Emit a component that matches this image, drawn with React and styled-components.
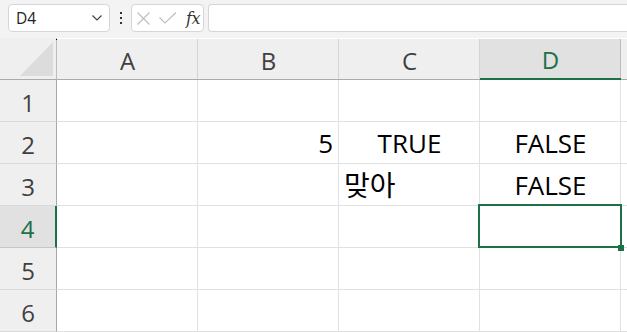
import React from "react";
import styled, { createGlobalStyle, css } from "styled-components";

const Global = createGlobalStyle`
  html, body { margin: 0; padding: 0; background: #f3f3f3; overflow: hidden; }
  body { font-family: "Open Sans", "Noto Sans", sans-serif; }
`;

const GREEN = "#1e7145";

const Page = styled.div`
  width: 627px;
  height: 332px;
  overflow: hidden;
  background: #f3f3f3;
  display: flex;
  flex-direction: column;
`;

const Toolbar = styled.div`
  height: 38px;
  flex: none;
  display: flex;
  align-items: flex-start;
  padding: 4px 0 0 8px;
  box-sizing: border-box;
`;

const Box = styled.div`
  height: 28px;
  box-sizing: border-box;
  background: #fff;
  border: 1px solid #d6d6d6;
  border-radius: 4px;
  display: flex;
  align-items: center;
`;

const NameBox = styled(Box)`
  width: 102px;
  padding: 0 6px 0 7px;
  justify-content: space-between;
  font-size: 15.5px;
  color: #222;
  font-family: "Open Sans", sans-serif;
`;

const Dots = styled.div`
  width: 21px;
  height: 28px;
  display: flex;
  flex-direction: column;
  align-items: center;
  justify-content: center;
  gap: 3px;
  span { width: 2px; height: 2px; background: #333; display: block; }
`;

const FxBox = styled(Box)`
  width: 73px;
  padding: 0 3px 0 5px;
  justify-content: space-between;
`;

const Fx = styled.span`
  font-family: "DejaVu Serif", "Liberation Serif", serif;
  font-style: italic;
  font-size: 16px;
  color: #333;
  letter-spacing: -0.5px;
`;

const Formula = styled(Box)`
  flex: 1;
  margin-left: 4px;
  border-top-right-radius: 0;
  border-bottom-right-radius: 0;
  border-right: none;
`;

const Sheet = styled.div`
  flex: 1;
  display: grid;
  grid-template-columns: 57px 141px 141px 141px 141px 1fr;
  grid-template-rows: 42px repeat(6, 42px);
  background: #fff;
`;

const Corner = styled.div`
  background: #efefef;
  border-right: 1px solid #bcbcbc;
  border-bottom: 1px solid #ababab;
  position: relative;
  &::after {
    content: "";
    position: absolute;
    right: 3px;
    bottom: 3px;
    width: 0;
    height: 0;
    border-style: solid;
    border-width: 0 0 34px 33px;
    border-color: transparent transparent #dcdcdc transparent;
  }
  &::before {
    content: "";
    position: absolute;
    right: -1px;
    top: 1px;
    width: 1px;
    height: 1px;
    background: #000;
  }
`;

const ColHead = styled.div`
  background: ${(p) => (p.$sel ? "#e1e1e1" : "#efefef")};
  border-bottom: ${(p) => (p.$sel ? `2px solid ${GREEN}` : "1px solid #ababab")};
  box-shadow: inset -1px 0 0 ${(p) => (p.$sel ? "#bdbdbd" : "#d4d4d4")};
  margin-top: 1px;
  display: flex;
  align-items: center;
  justify-content: center;
  font-size: 24px;
  color: ${(p) => (p.$sel ? GREEN : "#3f3f3f")};
  padding-top: 2px;
  box-sizing: border-box;
`;

const RowHead = styled.div`
  background: ${(p) => (p.$sel ? "#e1e1e1" : "#efefef")};
  border-right: ${(p) => (p.$sel ? `2px solid ${GREEN}` : "1px solid #a8a8a8")};
  border-bottom: 1px solid ${(p) => (p.$sel ? "#c6c6c6" : "#dadada")};
  display: flex;
  align-items: center;
  justify-content: center;
  font-size: 24px;
  color: ${(p) => (p.$sel ? GREEN : "#3f3f3f")};
  padding-top: 3px;
  box-sizing: border-box;
`;

const Cell = styled.div`
  border-right: 1px solid #e1e1e1;
  border-bottom: 1px solid #e1e1e1;
  display: flex;
  align-items: flex-end;
  justify-content: ${(p) =>
    p.$align === "right" ? "flex-end" : p.$align === "center" ? "center" : "flex-start"};
  padding: 0 5px 3px 6px;
  font-size: 26px;
  line-height: 34px;
  color: #000;
  font-family: "Open Sans", "Noto Sans CJK KR", sans-serif;
  box-sizing: border-box;
  position: relative;
  white-space: nowrap;
  ${(p) =>
    p.$sel &&
    css`
      &::after {
        content: "";
        position: absolute;
        left: -2px;
        top: -2px;
        right: -2px;
        bottom: -1px;
        border: 2px solid ${GREEN};
      }
      &::before {
        content: "";
        position: absolute;
        right: -4px;
        bottom: -4px;
        width: 6px;
        height: 6px;
        background: ${GREEN};
        z-index: 2;
      }
    `}
`;

const Korean = styled.span`
  font-family: "Noto Sans CJK KR", sans-serif;
  font-size: 28px;
  font-weight: 400;
  line-height: 34px;
  position: relative;
  left: -1px;
  top: -1px;
`;

const Chevron = () => (
  <svg width="12" height="8" viewBox="0 0 12 8">
    <path d="M1.5 1.5 L6 6 L10.5 1.5" fill="none" stroke="#444" strokeWidth="1.2" />
  </svg>
);

const XIcon = () => (
  <svg width="13" height="13" viewBox="0 0 13 13">
    <path d="M0.5 0.5 L12.5 12.5 M12.5 0.5 L0.5 12.5" stroke="#bdbdbd" strokeWidth="1.1" fill="none" />
  </svg>
);

const CheckIcon = () => (
  <svg width="18" height="12" viewBox="0 0 18 12">
    <path d="M0.5 5.5 L6 11 L17 0.5" stroke="#bdbdbd" strokeWidth="1.1" fill="none" />
  </svg>
);

const cols = ["A", "B", "C", "D"];
const data = {
  2: { B: { v: "5", a: "right" }, C: { v: "TRUE", a: "center" }, D: { v: "FALSE", a: "center" } },
  3: { C: { v: "맞아", a: "left", k: true }, D: { v: "FALSE", a: "center" } },
};

export default function App() {
  return (
    <Page>
      <Global />
      <Toolbar>
        <NameBox>
          <span>D4</span>
          <Chevron />
        </NameBox>
        <Dots>
          <span />
          <span />
          <span />
        </Dots>
        <FxBox>
          <XIcon />
          <CheckIcon />
          <Fx>fx</Fx>
        </FxBox>
        <Formula />
      </Toolbar>
      <Sheet>
        <Corner />
        {cols.map((c) => (
          <ColHead key={c} $sel={c === "D"}>
            {c}
          </ColHead>
        ))}
        <ColHead />
        {[1, 2, 3, 4, 5, 6].map((r) => (
          <React.Fragment key={r}>
            <RowHead $sel={r === 4}>{r}</RowHead>
            {cols.map((c) => {
              const d = data[r] && data[r][c];
              return (
                <Cell key={c} $align={d ? d.a : "left"} $sel={r === 4 && c === "D"}>
                  {d ? d.k ? <Korean>{d.v}</Korean> : d.v : null}
                </Cell>
              );
            })}
            <Cell />
          </React.Fragment>
        ))}
      </Sheet>
    </Page>
  );
}
